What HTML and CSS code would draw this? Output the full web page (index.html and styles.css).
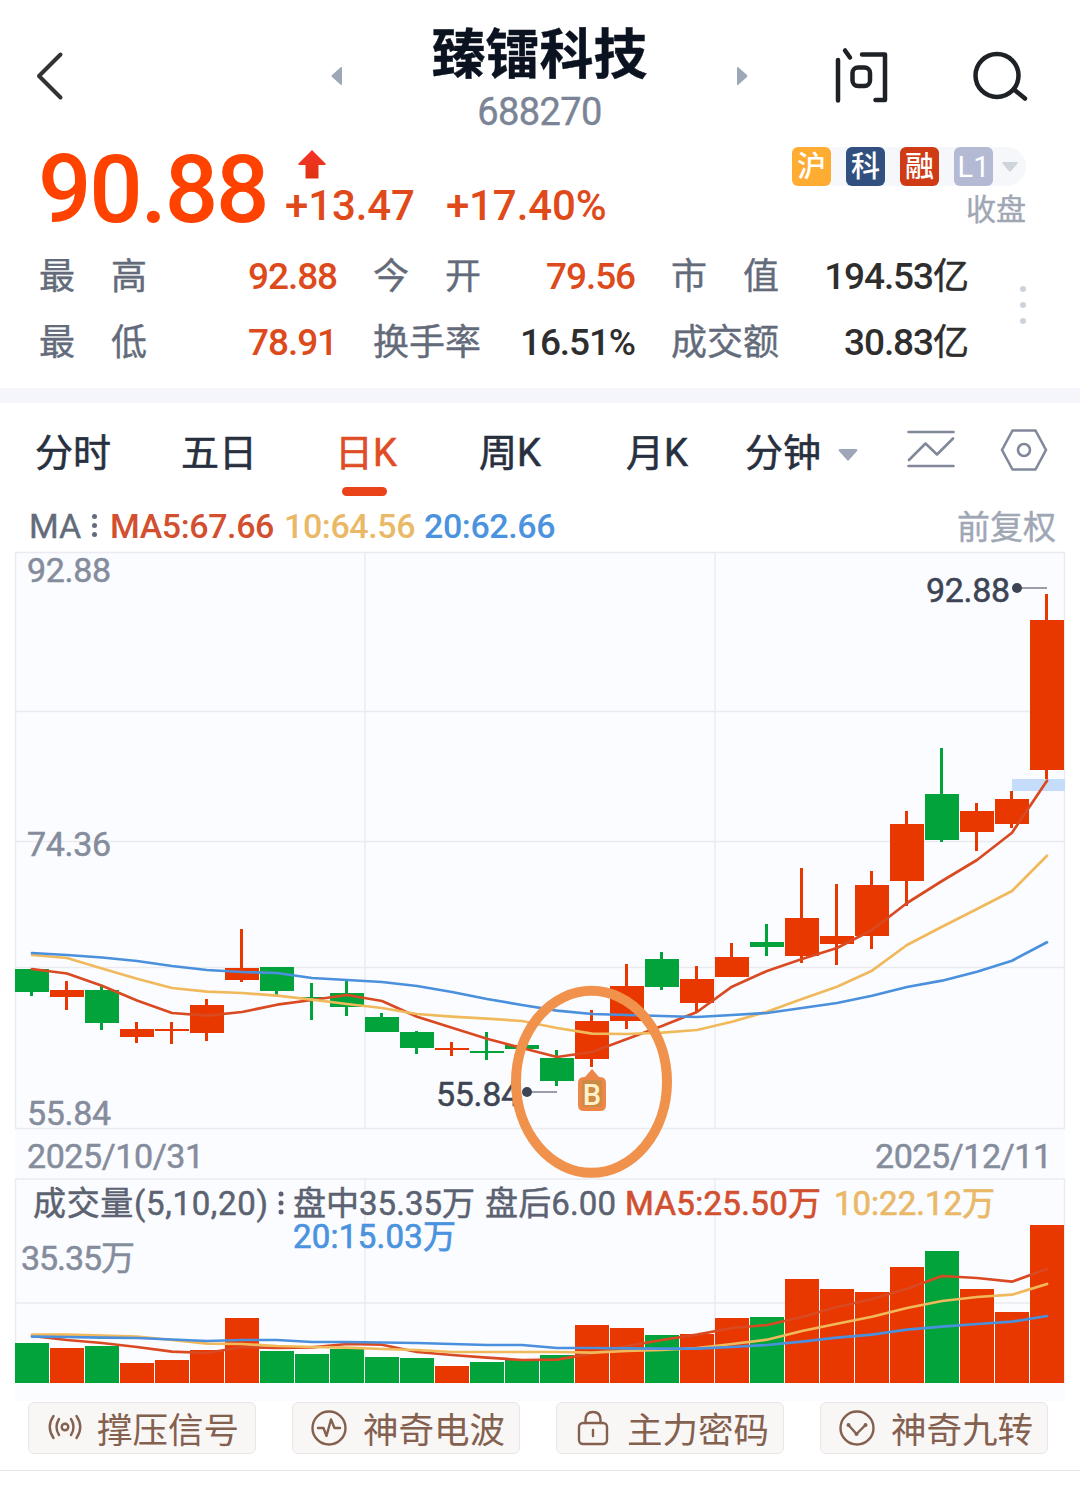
FILE: index.html
```html
<!DOCTYPE html>
<html lang="zh-CN">
<head>
<meta charset="utf-8">
<title>臻镭科技 688270</title>
<link rel="stylesheet" href="styles.css">
</head>
<body>
<header class="topbar">
  <svg class="back" width="28" height="50" viewBox="36 51 28 50"><path d="M60.5 54.500L39 76L60.500 97.500"/></svg>
  <svg class="prev" width="11" height="20" viewBox="0 0 11 20"><path d="M10 1Q11 0.500 11 2V18Q11 19.500 10 19L1 11Q0 10 1 9z"/></svg>
  <div class="title">
    <h1>臻镭科技</h1>
    <span>688270</span>
  </div>
  <svg class="next" width="11" height="20" viewBox="0 0 11 20"><path d="M1 1Q0 0.500 0 2V18Q0 19.500 1 19L10 11Q11 10 10 9z"/></svg>
  <svg class="ask" width="54" height="58" viewBox="834 47 54 58"><path d="M838 60V100.500M845 50.500L850 57.500M862 54.500H885V100H875.500"/><rect x="852.500" y="67.500" width="17.500" height="18.500" rx="5.500"/></svg>
  <svg class="search" width="56" height="52" viewBox="972 50 56 52"><circle cx="997" cy="75.500" r="21.500"/><path d="M1014 89.500L1025 98.500"/></svg>
</header>

<section class="quote">
  <div class="price-row">
    <div class="price">90.88</div>
    <div class="change">
      <svg class="up" width="28" height="30" viewBox="0 0 28 30"><defs><linearGradient id="up" x2="0" y2="1"><stop stop-color="#f8332a"/><stop offset="1" stop-color="#dc3510"/></linearGradient></defs><path fill="url(#up)" d="M14 0L27.500 13.500V15H20.500V28.500H7.500V15H0.500V13.500z"/></svg>
      <div class="delta"><span>+13.47</span><span>+17.40%</span></div>
    </div>
    <div class="flags">
      <div class="tags">
        <span class="tag sh">沪</span><span class="tag kc">科</span><span class="tag rz">融</span><span class="tag l1">L1</span>
        <svg width="16" height="10" viewBox="0 0 16 10"><path fill="#cfd3da" d="M1 0H15Q16 0.500 15.500 1.500L9 9Q8 10 7 9L0.500 1.500Q0 0.500 1 0z"/></svg>
      </div>
      <div class="state">收盘</div>
    </div>
  </div>
  <div class="stats-row">
    <dl class="stats">
      <dt><span>最</span><span>高</span></dt><dd class="rise">92.88</dd>
      <dt><span>今</span><span>开</span></dt><dd class="rise">79.56</dd>
      <dt><span>市</span><span>值</span></dt><dd>194.53<b>亿</b></dd>
      <dt><span>最</span><span>低</span></dt><dd class="rise">78.91</dd>
      <dt>换手率</dt><dd>16.51%</dd>
      <dt>成交额</dt><dd>30.83<b>亿</b></dd>
    </dl>
    <div class="more"><i></i><i></i><i></i></div>
  </div>
</section>

<nav class="tabs">
  <span>分时</span><span>五日</span><span class="active">日K</span><span>周K</span><span>月K</span><span>分钟</span>
  <svg class="drop" width="20" height="12" viewBox="0 0 20 12"><path fill="#9ea6b8" d="M1.500 0H18.500Q20 0.500 19 2L11 11Q10 12 9 11L1 2Q0 0.500 1.500 0z"/></svg>
  <svg class="line-icon" width="50" height="42" viewBox="906 429 50 42"><path d="M908.500 432H953.500M908.500 466H953.500M909 460L925.500 443.500L937 454.500L953 438.500"/></svg>
  <svg class="line-icon" width="48" height="42" viewBox="1000 429 48 42"><path d="M1012.500 430.500H1035.500L1046 450L1035.500 469.500H1012.500L1002 450z"/><circle cx="1024" cy="450" r="6"/></svg>
</nav>

<div class="legend">
  <span class="name">MA</span><span class="grip"><i></i><i></i><i></i></span>
  <span class="ma5">MA5:67.66</span><span class="ma10">10:64.56</span><span class="ma20">20:62.66</span>
  <span class="adjust">前复权</span>
</div>

<svg class="chart" width="1080" height="849" viewBox="0 552 1080 849">
  <rect class="panel" x="15" y="552" width="1050" height="849"/>
  <path class="grid" d="M15 552.500H1065M15 711.500H1065M15 841.500H1065M15 967.500H1065M15 1128.500H1065M15 1179H1065M15 1303H1065M15.500 552V1128M1064.500 552V1128M365 552V1128M715 552V1128M15.500 1179V1383M1064.500 1179V1383M365 1179V1383M715 1179V1383"/>
  <rect x="1012" y="779" width="53" height="12" fill="#c5dcfa"/>

  <g class="axis">
    <text x="27" y="582" textLength="84">92.88</text>
    <text x="27" y="856" textLength="84">74.36</text>
    <text x="27" y="1125" textLength="84">55.84</text>
    <text x="27" y="1168" textLength="177">2025/10/31</text>
    <text x="875" y="1168" textLength="177">2025/12/11</text>
    <text x="21" y="1270" textLength="114">35.35万</text>
  </g>
  <g class="head">
    <text x="33" y="1215" textLength="235">成交量(5,10,20)</text>
    <text x="293" y="1215" textLength="182">盘中35.35万</text>
    <text x="485" y="1215" textLength="131">盘后6.00</text>
    <text class="ma5" x="625" y="1215" textLength="196">MA5:25.50万</text>
    <text class="ma10" x="834" y="1215" textLength="161">10:22.12万</text>
    <text class="ma20" x="293" y="1248" textLength="163">20:15.03万</text>
    <circle cx="281" cy="1194" r="2.500"/><circle cx="281" cy="1203" r="2.500"/><circle cx="281" cy="1212" r="2.500"/>
  </g>

  <path class="fall" d="M15 969h34v23h-34zM30 969h3v27h-3zM85 990h34v33h-34zM100 986h3v44h-3zM260 967h34v24h-34zM275 967h3v28h-3zM295 997h34v2h-34zM310 983h3v37h-3zM330 993h34v14h-34zM345 981h3v35h-3zM365 1017h34v15h-34zM380 1013h3v19h-3zM400 1032h34v16h-34zM415 1031h3v23h-3zM470 1051h34v2h-34zM485 1032h3v28h-3zM505 1045h34v4h-34zM540 1058h34v23h-34zM555 1050h3v36h-3zM645 959h34v28h-34zM660 952h3v38h-3zM750 942h34v5h-34zM765 924h3v32h-3zM925 794h34v46h-34zM940 748h3v94h-3z"/>
  <path class="rise" d="M50 990h34v7h-34zM65 981h3v29h-3zM120 1029h34v8h-34zM135 1022h3v21h-3zM155 1029h34v2h-34zM170 1022h3v22h-3zM190 1005h34v28h-34zM205 999h3v42h-3zM225 968h34v12h-34zM240 929h3v53h-3zM435 1048h34v2h-34zM450 1042h3v14h-3zM575 1021h34v38h-34zM590 1010h3v57h-3zM610 986h34v35h-34zM625 964h3v65h-3zM680 979h34v24h-34zM695 966h3v46h-3zM715 957h34v20h-34zM730 943h3v34h-3zM785 918h34v38h-34zM800 868h3v95h-3zM820 936h34v8h-34zM835 884h3v81h-3zM855 885h34v51h-34zM870 871h3v78h-3zM890 824h34v57h-34zM905 811h3v95h-3zM960 811h34v21h-34zM975 803h3v48h-3zM995 799h34v25h-34zM1010 791h3v37h-3zM1030 620h34v150h-34zM1045 594h3v185h-3z"/>

  <g class="lines">
    <polyline class="s5" points="32,969 67,973.5 102,985.7 137,1000.5 172,1013 207,1015.7 242,1012 277,1004.7 312,1000 347,995 382,1001 417,1016.7 452,1027.7 487,1038.7 522,1048 557,1057 592,1052 627,1039 662,1026 697,1012 732,986.7 767,971 802,959 837,948 872,930 907,903 942,881 977,860 1012,832.7 1047,780.7"/>
    <polyline class="s10" points="32,955 67,958 102,968.5 137,978.7 172,988 207,991.7 242,993 277,995.7 312,999.7 347,1004 382,1008 417,1014 452,1016.7 487,1018.7 522,1021 557,1028 592,1033.7 627,1034 662,1032.7 697,1030 732,1021.7 767,1011.7 802,999 837,986.7 872,970.7 907,945 942,926.7 977,909 1012,891 1047,855.7"/>
    <polyline class="s20" points="32,953 67,955 102,957.5 137,961 172,966 207,970 242,972 277,973 312,978 347,980 382,982 417,986 452,992 487,999 522,1005 557,1010.7 592,1014 627,1015 662,1016 697,1017 732,1015 767,1013 802,1008 837,1003 872,995.7 907,987 942,980.7 977,971.7 1012,960.7 1047,942.3"/>
  </g>

  <g class="mark">
    <text x="926" y="602" textLength="84">92.88</text>
    <path d="M1017 588H1047"/><circle cx="1017" cy="588" r="5"/>
    <text x="436" y="1106" textLength="84">55.84</text>
    <path d="M527 1092H557"/><circle cx="527" cy="1092" r="5"/>
  </g>

  <g class="badge">
    <path d="M585 1077L592 1069L599 1077H600Q606 1077 606 1083V1105Q606 1111 600 1111H584Q578 1111 578 1105V1083Q578 1077 584 1077z"/>
    <rect x="582" y="1080" width="20" height="27" rx="2"/>
    <text x="592" y="1104.500" text-anchor="middle">B</text>
  </g>
  <ellipse cx="591.500" cy="1081.800" rx="75.500" ry="91" fill="none" stroke="#f0924b" stroke-width="10"/>

  <path class="fall" d="M15 1343h34v40h-34zM85 1346h34v37h-34zM260 1351h34v32h-34zM295 1354h34v29h-34zM330 1349h34v34h-34zM365 1357h34v26h-34zM400 1358h34v25h-34zM470 1362h34v21h-34zM505 1360h34v23h-34zM540 1355h34v28h-34zM645 1335h34v48h-34zM750 1317h34v66h-34zM925 1251h34v132h-34z"/>
  <path class="rise" d="M50 1348h34v35h-34zM120 1363h34v20h-34zM155 1360h34v23h-34zM190 1350h34v33h-34zM225 1318h34v65h-34zM435 1366h34v17h-34zM575 1325h34v58h-34zM610 1328h34v55h-34zM680 1334h34v49h-34zM715 1318h34v65h-34zM785 1279h34v104h-34zM820 1289h34v94h-34zM855 1292h34v91h-34zM890 1267h34v116h-34zM960 1289h34v94h-34zM995 1312h34v71h-34zM1030 1225h34v158h-34z"/>
  <g class="lines">
    <polyline class="s5" points="32,1336 67,1340 102,1343 137,1347 172,1351.7 207,1353 242,1347 277,1348 312,1347.3 347,1344 382,1344.7 417,1352 452,1355 487,1357.7 522,1360 557,1359.7 592,1353.7 627,1346 662,1340 697,1334.7 732,1328 767,1325 802,1317 837,1307 872,1299 907,1288.7 942,1276 977,1278 1012,1281.7 1047,1269"/>
    <polyline class="s10" points="32,1334.7 67,1334.7 102,1335.7 137,1336.7 172,1340 207,1343.7 242,1344 277,1346 312,1347 347,1347.7 382,1349 417,1350 452,1352 487,1352 522,1352 557,1352 592,1352.7 627,1351 662,1350 697,1348 732,1344 767,1339.7 802,1331 837,1323.7 872,1316.7 907,1308 942,1301 977,1297 1012,1294.7 1047,1284"/>
    <polyline class="s20" points="32,1336.7 67,1337 102,1337.7 137,1338 172,1339.5 207,1341 242,1340 277,1340 312,1342 347,1342 382,1342.5 417,1343 452,1344 487,1345 522,1345 557,1348 592,1348 627,1348.3 662,1348.7 697,1348.7 732,1347 767,1345 802,1341.7 837,1337.7 872,1334.7 907,1329.7 942,1326.7 977,1324 1012,1321.7 1047,1316"/>
  </g>
</svg>

<div class="signals">
  <button><svg width="36" height="36" viewBox="0 0 36 36"><circle cx="18" cy="17" r="3.300"/><path d="M12 9Q7 17 12 25M24 9Q29 17 24 25M6.500 6Q-1 17 6.500 28M29.500 6Q37 17 29.500 28"/></svg>撑压信号</button>
  <button><svg width="36" height="36" viewBox="0 0 36 36"><circle cx="18" cy="18" r="16.500"/><path d="M7 18H12.500L15.500 26L20 9.500L23.500 18H29"/></svg>神奇电波</button>
  <button><svg width="36" height="36" viewBox="0 0 36 36"><rect x="4" y="13" width="28" height="21" rx="4"/><path d="M10.500 13V10Q10.500 2 18 2Q25.500 2 25.500 10V13M18 20V26"/></svg>主力密码</button>
  <button><svg width="36" height="36" viewBox="0 0 36 36"><circle cx="18" cy="18" r="16.500"/><path d="M9.500 15L17.500 24L26.500 15"/><g class="dots"><circle cx="9.500" cy="15" r="2"/><circle cx="17.500" cy="24" r="2"/><circle cx="26.500" cy="15" r="2"/></g></svg>神奇九转</button>
</div>
</body>
</html>
```
FILE: styles.css
```css
* { box-sizing: border-box; }
body {
  margin: 0;
  width: 1080px;
  height: 1500px;
  background: #fff;
  font-family: Roboto, "Noto Sans CJK SC", sans-serif;
  color: #2b3140;
  overflow: hidden;
}
svg { display: block; flex: none; }
i { display: block; }

.topbar { display: flex; align-items: center; height: 138px; padding: 14px 0 0 36px; }
.topbar svg { fill: none; stroke: #1e2226; stroke-width: 4.5; stroke-linecap: round; stroke-linejoin: round; }
.topbar .back { stroke: #333; stroke-width: 4; }
.topbar .prev, .topbar .next { fill: #9ea6b8; stroke: none; }
.prev { margin-left: 267px; }
.title { width: 395px; padding-top: 4px; text-align: center; color: #7b8496; font-size: 38px; line-height: 46px; letter-spacing: -.6px; -webkit-text-stroke: .4px; }
.title h1 { margin: -4px 0 4px; color: #0c1320; font-family: "Noto Sans CJK SC", sans-serif; font-size: 54px; line-height: 68px; font-weight: 700; letter-spacing: 0; }
.title span { display: block; }
.ask { margin-left: 86px; }
.search { margin-left: 84px; }

.price-row { display: flex; align-items: flex-start; height: 104px; padding: 0 54px 0 38px; }
.price { width: 230px; color: #ff4200; font-size: 94px; font-weight: 500; line-height: 104px; letter-spacing: -2.100px; white-space: nowrap; }
.change { margin: 12px 0 0 17px; }
.up { margin-left: 13px; }
.delta { display: flex; gap: 31px; color: #e04a1b; font-size: 42px; font-weight: 500; line-height: 52px; letter-spacing: -.1px; }
.flags { margin: 9px 0 0 auto; }
.tags { display: flex; align-items: center; gap: 15px; height: 39px; padding-right: 8px; border-radius: 6px 20px 20px 6px; background: linear-gradient(90deg, #fff, #f6f7fa 50px); }
.tag { width: 39px; height: 39px; border-radius: 6px; color: #fff; font-size: 29px; line-height: 41px; text-align: center; font-weight: 500; }
.tags svg { margin-left: -6px; }
.sh { background: #ffac33; }
.kc { background: #32507f; }
.rz { background: #cf3b14; }
.l1 { background: #b4bad4; font-weight: 400; }
.state { color: #a0a7b4; font-size: 30px; line-height: 48px; text-align: right; -webkit-text-stroke: .4px; }

.stats-row { display: flex; height: 146px; padding-left: 39px; }
.stats { display: grid; grid-template-columns: 108px 226px 108px 190px 108px 190px; grid-template-rows: 66px 66px; margin: 0; line-height: 69px; font-size: 36px; }
.stats dt { display: flex; justify-content: space-between; padding-top: 1px; color: #636b7b; -webkit-text-stroke: .4px; }
.stats dd { margin: 0; text-align: right; color: #2e2e2e; font-size: 37px; font-weight: 500; letter-spacing: -1.100px; }
.stats b { font-weight: 400; font-size: 36px; letter-spacing: 0; -webkit-text-stroke: .5px; }
.stats dd:nth-of-type(3n+1), .stats dd:nth-of-type(3n+2) { padding-right: 36px; }
.stats dd.rise { color: #dd4a1c; }
.more { display: flex; flex-direction: column; gap: 10px; margin: 44px 0 0 51px; }
.more i { width: 6px; height: 6px; border-radius: 50%; background: #cdd4dc; }

.tabs {
  display: grid;
  grid-template-columns: 146px 154px 144px 147px 119px 93px 68px 94px 48px;
  align-items: center;
  height: 112px;
  padding-left: 35px;
  border-top: 15px solid #f4f6fb;
  font-size: 38px;
  line-height: 97px;
  color: #28303f;
  -webkit-text-stroke: .6px;
}
.tabs span { padding-top: 2px; }
.tabs .active { position: relative; color: #e04c26; }
.tabs .active::after { content: ""; position: absolute; left: 7px; top: 84px; width: 45px; height: 9px; border-radius: 5px; background: #ea431a; }
.drop { margin-top: 5px; }
.line-icon { fill: none; stroke: #81889a; stroke-width: 2.6; stroke-linecap: round; stroke-linejoin: round; margin-top: -5px; }

.legend { display: flex; align-items: center; height: 52px; padding: 0 24px 0 29px; font-size: 34px; line-height: 52px; }
.legend .name { width: 63px; color: #636b7b; -webkit-text-stroke: .4px; }
.grip { display: flex; flex-direction: column; gap: 4px; width: 18px; margin-top: -2px; }
.grip i { width: 5px; height: 5px; border-radius: 50%; background: #636b7b; }
.legend .ma5 { width: 174px; }
.legend .ma10 { width: 140px; }
.legend .ma5, .legend .ma10, .legend .ma20 { font-weight: 500; letter-spacing: -.4px; }
.adjust { margin: 3px 0 0 auto; color: #a0a7b4; font-size: 33px; -webkit-text-stroke: .4px; }
.ma5 { color: #d2502f; }
.ma10 { color: #e9b968; }
.ma20 { color: #4b93de; }

.chart { font-size: 34px; overflow: visible; }
.panel { fill: #fbfcff; }
.grid { fill: none; stroke: #e9ebef; stroke-width: 1.4; }
.axis { fill: #858c9b; stroke: #858c9b; stroke-width: .5; }
.head { fill: #5b6271; font-size: 33px; }
.head text { stroke: #5b6271; stroke-width: .5; }
.head .ma5 { fill: #d2502f; stroke: #d2502f; }
.head .ma10 { fill: #e9b968; stroke: #e9b968; }
.head .ma20 { fill: #4b93de; stroke: #4b93de; }
.head .ma5, .head .ma10, .head .ma20 { stroke-width: .7; }
.chart .fall { fill: #03a33b; }
.chart .rise { fill: #e83800; }
.lines { fill: none; stroke-width: 2.7; stroke-linejoin: round; stroke-linecap: round; }
.s5 { stroke: #d94a22; }
.s10 { stroke: #f0b95c; }
.s20 { stroke: #4a90dd; }
.mark { fill: #3d4554; }
.mark text { stroke: #3d4554; stroke-width: .5; }
.mark path { stroke: #9a9ea8; stroke-width: 2; }
.badge path { fill: #ed8646; }
.badge rect { fill: #cc8a45; }
.badge text { fill: #fff0c8; font-size: 29px; font-weight: 500; }

.signals { display: flex; gap: 36px; height: 70px; padding: 1px 28px 0; border-bottom: 1px solid #e4e5e8; }
.signals button { display: flex; align-items: center; width: 228px; height: 52px; padding: 0 0 1px 18px; border: 1.5px solid #ece5e5; border-radius: 6px; background: #f9f6f6; color: #84604f; font: 400 35.500px/49px "Noto Sans CJK SC", sans-serif; white-space: nowrap; }
.signals svg { margin: 1px 16px 0 0; fill: none; stroke: #84604f; stroke-width: 2.4; stroke-linecap: round; stroke-linejoin: round; }
.signals button:first-child svg { margin-right: 14px; }
.signals .dots { fill: #84604f; stroke: none; }
```
